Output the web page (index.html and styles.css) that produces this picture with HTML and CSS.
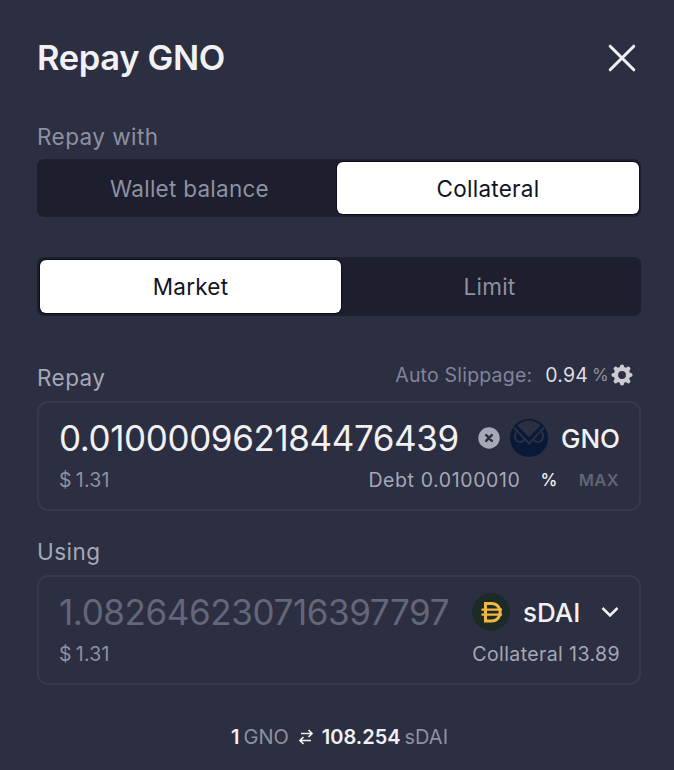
FILE: index.html
```html
<!DOCTYPE html>
<html lang="en">
<head>
<meta charset="utf-8">
<title>Repay GNO</title>
<link rel="stylesheet" href="styles.css">
</head>
<body>
<main class="modal">
  <header class="header">
    <h1 class="title">Repay GNO</h1>
    <button class="close" aria-label="Close">
      <svg width="28" height="28" viewBox="0 0 28 28" fill="none" stroke="#f1f1f3" stroke-width="3" stroke-linecap="round"><path d="M2.200 2.200 25.800 25.800M25.800 2.200 2.200 25.800"/></svg>
    </button>
  </header>

  <div class="label label-with">Repay with</div>
  <div class="toggle toggle-source">
    <button class="option">Wallet balance</button>
    <button class="option selected">Collateral</button>
  </div>
  <div class="toggle toggle-type">
    <button class="option selected">Market</button>
    <button class="option">Limit</button>
  </div>

  <div class="field-head">
    <span class="label">Repay</span>
    <div class="slippage">
      <span class="slippage-label">Auto Slippage:</span>
      <span class="slippage-value">0.94</span>
      <span class="slippage-unit">%</span>
      <svg class="gear" width="22" height="22" viewBox="-11 -11 22 22"><g stroke="#cbcbd1" stroke-width="4.200" stroke-linecap="round"><path d="M0-8.500V8.500M-8.500 0H8.500M-6.300-6.300 6.300 6.300M6.300-6.300-6.300 6.300"/></g><circle r="8.300" fill="#cbcbd1"/><circle r="3.900" fill="#2c2e41"/></svg>
    </div>
  </div>
  <section class="box">
    <div class="main-row">
      <span class="amount">0.010000962184476439</span>
      <svg class="clear" width="22" height="22" viewBox="0 0 22 22"><circle cx="11" cy="11" r="10.700" fill="#a5a8b6"/><path d="m8.200 8.200 5.600 5.600m0-5.600-5.600 5.600" stroke="#2c2e41" stroke-width="2.500" stroke-linecap="round"/></svg>
      <svg class="token-gno" width="38" height="38" viewBox="0 0 38 38"><circle cx="19" cy="19" r="19" fill="#091938"/><path d="M7 6.500Q19-3.500 31 6.500L19 18.500Z" fill="#2c2e41"/><g fill="none" stroke="#2c2e41" stroke-width="2"><path d="M4 8.500 19 24.500 34 8.500"/><path d="M6.500 13C3.500 16 5 22 9 22.800c2.500.4 4.500-.8 5.500-2.600M31.500 13c3 3 1.500 9-2.500 9.800-2.500.4-4.500-.8-5.500-2.600"/></g><path d="M6 6.800 19 20.300 32 6.800" fill="none" stroke="#091938" stroke-width="2"/></svg>
      <span class="symbol">GNO</span>
    </div>
    <div class="sub-row">
      <span class="usd">$<span class="usd-value">1.31</span></span>
      <span class="balance debt">Debt 0.0100010</span>
      <span class="percent">%</span>
      <span class="max">MAX</span>
    </div>
  </section>

  <div class="label label-using">Using</div>
  <section class="box">
    <div class="main-row">
      <span class="amount muted">1.082646230716397797</span>
      <svg class="token-dai" width="38" height="38" viewBox="0 0 38 38"><circle cx="19" cy="19" r="18.900" fill="#1c2b25"/><g fill="none" stroke="#f3b63f" stroke-width="3"><path d="M13.500 10.500h6c11.500 0 11.500 17.500 0 17.500h-6z"/><path d="M9.500 16.700h20.500M9.500 21.700h20.500" stroke-width="2.200"/></g></svg>
      <span class="symbol sdai">sDAI</span>
      <svg class="chevron" width="18" height="12" viewBox="0 0 18 12" fill="none" stroke="#f1f1f3" stroke-width="2.500"><path d="m1.500 2 7.500 7.500L16.500 2"/></svg>
    </div>
    <div class="sub-row">
      <span class="usd">$<span class="usd-value">1.31</span></span>
      <span class="balance collateral">Collateral 13.89</span>
    </div>
  </section>

  <footer class="rate">
    <b>1</b><span class="rate-from">GNO</span>
    <svg class="swap" width="16" height="16" viewBox="0 0 16 16" fill="none" stroke="#f1f1f3" stroke-width="1.700"><path d="M3 4.500h11M10.500 1l3.500 3.500L10.500 8M13 11.500H2M5.500 8 2 11.500 5.500 15"/></svg>
    <b class="rate-value">108.254</b><span class="rate-to">sDAI</span>
  </footer>
</main>
</body>
</html>
```
FILE: styles.css
```css
* { box-sizing: border-box; }
body { margin: 0; background: #2c2e41; font-family: Inter, sans-serif; color: #f1f1f3; }
button { font: inherit; border: 0; background: none; padding: 0; }
svg { display: block; flex: none; }
.modal { height: 770px; padding: 36px 33px 0 37px; overflow: hidden; white-space: nowrap; }
.header { display: flex; justify-content: space-between; align-items: center; height: 44px; padding-right: 5px; }
.title { margin: 0; font-size: 34.500px; font-weight: 600; line-height: 44px; letter-spacing: -.35px; }
.label { font-size: 22.500px; line-height: 30px; letter-spacing: .45px; color: #a5a8b6; }
.label-with { margin-top: 42px; margin-bottom: 7px; color: #8e91a0; }
.toggle { display: grid; grid-template-columns: 1fr 1fr; background: #1d1f2e; border-radius: 7px; padding: 3px; height: 58px; }
.toggle-source { grid-template-columns: 297px 1fr; padding-right: 2px; }
.toggle-type { grid-template-columns: 301px 1fr; margin-top: 40px; height: 59px; }
.option { font-size: 22.500px; letter-spacing: .25px; color: #8e91a0; border-radius: 6px; }
.toggle-source .option:first-child { padding-left: 2px; }
.option.selected { background: #fff; color: #111325; box-shadow: 0 0 0 1px #0c0d18; }
.field-head { display: flex; justify-content: space-between; margin-top: 47px; height: 38px; }
.slippage { display: flex; align-items: center; height: 24px; font-size: 19.500px; letter-spacing: .2px; padding-right: 8px; }
.slippage-label { color: #81849a; margin-right: 13px; }
.slippage-value { color: #dedee4; margin-right: 4px; }
.slippage-unit { color: #8e91a0; font-size: 17px; margin-right: 2px; }
.box { height: 110px; border: 2px solid #383a4c; border-radius: 11px; padding: 14px 19px 14px 20px; }
.main-row { display: flex; align-items: center; height: 42px; }
.amount { font-size: 35px; letter-spacing: -.4px; width: 420px; }
.muted { color: #646679; width: 413px; }
.token-gno { margin-left: 10px; }
.symbol { font-size: 26px; font-weight: 500; margin-left: 13px; }
.chevron { margin-left: 21px; }
.sub-row { display: flex; align-items: center; height: 26px; margin-top: 8px; font-size: 19.500px; letter-spacing: .4px; color: #8e91a0; }
.usd { letter-spacing: .25px; }
.usd-value { margin-left: 4px; }
.balance { margin-left: auto; color: #a5a8b6; }
.debt { letter-spacing: .6px; }
.percent { color: #f1f1f3; font-size: 17px; font-weight: 500; margin-left: 20px; }
.max { color: #626477; font-size: 16.500px; font-weight: 600; margin-left: 21px; padding-right: 1px; }
.label-using { margin-top: 26px; margin-bottom: 8px; }
.rate { display: flex; align-items: center; margin: 39px 0 0 194px; height: 26px; font-size: 20px; }
.rate b { font-weight: 600; }
.rate-from, .rate-to { color: #8e91a0; margin-left: 4px; }
.swap { margin-left: 9px; }
.rate-value { margin-left: 8px; }
```
